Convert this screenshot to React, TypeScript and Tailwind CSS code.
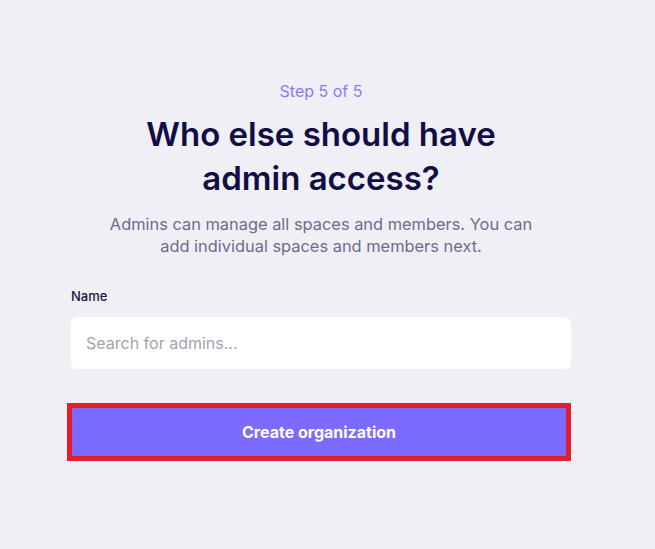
import React from "react";

export default function App() {
  return (
    <div
      className="min-h-[549px] w-full bg-[#f0eff5] text-[#13104a]"
      style={{ fontFamily: "Inter, 'Noto Sans', sans-serif" }}
    >
      <div className="flex flex-col items-center w-[500px] ml-[71px] pt-[81px]">
        <div className="text-[16px] leading-[20px] text-[#8b7cf6]">Step 5 of 5</div>
        <h1 className="mt-[11px] text-[33px] leading-[44px] font-semibold text-center text-[#110d45]">
          Who else should have
          <br />
          admin access?
        </h1>
        <p className="mt-[13px] text-[16.4px] leading-[22px] text-center text-[#6f6b8c]">
          Admins can manage all spaces and members. You can
          <br />
          add individual spaces and members next.
        </p>
        <div className="self-stretch mt-[30px]">
          <div className="text-[13px] leading-[18px] font-medium text-[#1a1740]">Name</div>
          <input
            className="mt-[12px] block w-[500px] h-[52px] rounded-[6px] bg-white px-[15px] text-[16px] outline-none placeholder:text-[#a3a2ad]"
            placeholder="Search for admins..."
          />
        </div>
      </div>
      <div className="ml-[67px] mt-[34px] w-[504px] h-[58px] border-[5px] border-[#e21f2d]">
        <button className="w-full h-full bg-[#7b6bff] text-white text-[16px] font-bold">
          Create organization
        </button>
      </div>
    </div>
  );
}
